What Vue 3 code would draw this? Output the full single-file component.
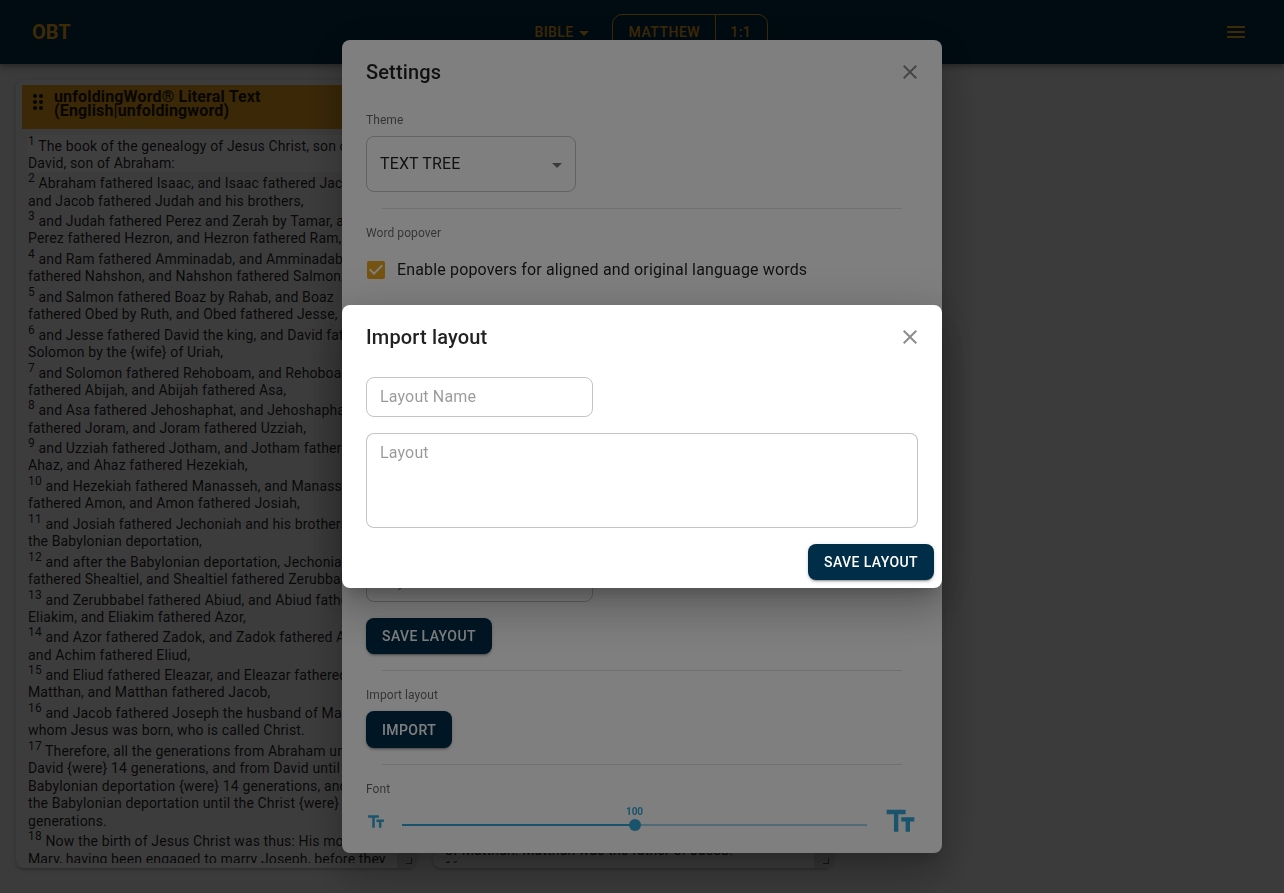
<script setup>
const closePath = 'M19 6.41 17.59 5 12 10.59 6.41 5 5 6.41 10.59 12 5 17.59 6.41 19 12 13.41 17.59 19 19 17.59 13.41 12z'
const dragPath = 'M11 18c0 1.1-.9 2-2 2s-2-.9-2-2 .9-2 2-2 2 .9 2 2zm-2-8c-1.1 0-2 .9-2 2s.9 2 2 2 2-.9 2-2-.9-2-2-2zm0-6c-1.1 0-2 .9-2 2s.9 2 2 2 2-.9 2-2-.9-2-2-2zm6 4c1.1 0 2-.9 2-2s-.9-2-2-2-2 .9-2 2 .9 2 2 2zm0 2c-1.1 0-2 .9-2 2s.9 2 2 2 2-.9 2-2-.9-2-2-2zm0 6c-1.1 0-2 .9-2 2s.9 2 2 2 2-.9 2-2-.9-2-2-2z'
const textFieldsPath = 'M2.5 4v3h5v12h3V7h5V4h-13zm19 5h-9v3h3v7h3v-7h3V9z'

const fontPercent = 50

const literalVerses = [
  'The book of the genealogy of Jesus Christ, son of David, son of Abraham:',
  'Abraham fathered Isaac, and Isaac fathered Jacob, and\u00a0Jacob fathered Judah and his brothers,',
  'and Judah fathered Perez and Zerah by Tamar, and Perez fathered Hezron, and Hezron fathered Ram,',
  'and Ram fathered Amminadab, and Amminadab fathered Nahshon, and Nahshon fathered Salmon,',
  'and Salmon fathered Boaz by Rahab, and Boaz fathered Obed by Ruth, and Obed fathered Jesse,',
  'and Jesse fathered David the king, and David fathered Solomon by the {wife} of Uriah,',
  'and Solomon fathered Rehoboam, and Rehoboam fathered Abijah, and Abijah fathered Asa,',
  'and Asa fathered Jehoshaphat, and Jehoshaphat fathered Joram, and Joram fathered Uzziah,',
  'and Uzziah fathered Jotham, and Jotham fathered Ahaz, and Ahaz fathered Hezekiah,',
  'and Hezekiah fathered Manasseh, and Manasseh fathered Amon, and Amon fathered Josiah,',
  'and Josiah fathered Jechoniah and his brothers at the\u00a0Babylonian deportation,',
  'and after the Babylonian deportation, Jechoniah fathered Shealtiel, and Shealtiel fathered Zerubbabel,',
  'and Zerubbabel fathered Abiud, and Abiud fathered Eliakim, and Eliakim fathered Azor,',
  'and Azor fathered Zadok, and Zadok fathered Achim, and Achim fathered Eliud,',
  'and Eliud fathered Eleazar, and Eleazar fathered Matthan, and Matthan fathered Jacob,',
  'and Jacob fathered Joseph the husband of Mary, from whom Jesus was born, who is called Christ.',
  'Therefore, all the generations from Abraham until David {were} 14 generations, and from David until the Babylonian deportation {were} 14 generations, and from the Babylonian deportation until the Christ {were} 14 generations.',
  'Now the birth of Jesus Christ was thus: His mother, Mary, having been engaged to marry Joseph, before they came together, was found to be pregnant by the Holy Spirit.',
]

const simplifiedVerses = [
  { n: 14, text: 'Azor was the father of Zadok. Zadok was the father of Achim. Achim was the father of Eliud.' },
  { n: 15, text: 'Eliud was the father of Eleazar. Eleazar was the father of Matthan. Matthan was the father of Jacob.' },
  { n: 16, text: 'Jacob was the father of Joseph.' },
]
</script>

<template>
  <div class="page">
    <header class="appbar">
      <div class="logo">OBT</div>
      <div class="nav">
        <div class="resource">BIBLE <span class="caret small"></span></div>
        <div class="pill">
          <span class="pill-book">MATTHEW</span>
          <span class="pill-ref">1:1</span>
        </div>
      </div>
      <svg class="menu" viewBox="0 0 24 24"><path d="M3 18h18v-2H3v2zm0-5h18v-2H3v2zm0-7v2h18V6H3z" /></svg>
    </header>

    <main class="panels">
      <section class="panel">
        <div class="panel-head">
          <svg class="drag" viewBox="0 0 24 24"><path :d="dragPath" /></svg>
          <div class="panel-title">unfoldingWord® Literal Text (English|unfoldingword)</div>
        </div>
        <div class="panel-main">
          <div class="verses">
            <div v-for="(v, i) in literalVerses" :key="i" class="verse" :class="{ active: i === 0 }">
              <sup>{{ i + 1 }}</sup> {{ v }}
            </div>
          </div>
          <div class="track"><span class="grip"></span></div>
        </div>
      </section>
      <section class="panel">
        <div class="panel-head">
          <svg class="drag" viewBox="0 0 24 24"><path :d="dragPath" /></svg>
          <div class="panel-title">unfoldingWord® Simplified Text (English|unfoldingword)</div>
        </div>
        <div class="panel-main">
          <div class="verses bottom">
            <div v-for="v in simplifiedVerses" :key="v.n" class="verse">
              <sup>{{ v.n }}</sup> {{ v.text }}
            </div>
          </div>
          <div class="track"><span class="grip"></span></div>
        </div>
      </section>
    </main>

    <div class="overlay">
      <div class="dialog settings">
        <div class="dialog-title">
          <span>Settings</span>
          <svg class="close" viewBox="0 0 24 24"><path :d="closePath" /></svg>
        </div>
        <div class="settings-body">
          <div class="label">Theme</div>
          <div class="select">TEXT TREE <span class="caret"></span></div>
          <hr class="rule" />
          <div class="label">Word popover</div>
          <div class="check-row">
            <svg class="check" viewBox="0 0 24 24"><path d="M19 3H5c-1.11 0-2 .9-2 2v14c0 1.1.89 2 2 2h14c1.11 0 2-.9 2-2V5c0-1.1-.89-2-2-2zm-9 14-5-5 1.41-1.41L10 14.17l7.59-7.59L19 8l-9 9z" /></svg>
            <span>Enable popovers for aligned and original language words</span>
          </div>
          <hr class="rule save-rule" />
          <div class="label save-label">Save layout</div>
          <input class="field" type="text" placeholder="Layout Name" />
          <button class="btn save-btn">Save layout</button>
          <hr class="rule" />
          <div class="label">Import layout</div>
          <button class="btn import-btn">Import</button>
          <hr class="rule" />
          <div class="label">Font</div>
          <div class="font-row">
            <svg class="tt tt-small" viewBox="0 0 24 24"><path :d="textFieldsPath" /></svg>
            <div class="slider">
              <div class="slider-fill" :style="{ width: fontPercent + '%' }"></div>
              <div class="slider-thumb" :style="{ left: fontPercent + '%' }">
                <span class="slider-value">100</span>
              </div>
            </div>
            <svg class="tt tt-large" viewBox="0 0 24 24"><path :d="textFieldsPath" /></svg>
          </div>
        </div>
      </div>
    </div>

    <div class="overlay">
      <div class="dialog import">
        <div class="dialog-title">
          <span>Import layout</span>
          <svg class="close" viewBox="0 0 24 24"><path :d="closePath" /></svg>
        </div>
        <div class="import-body">
          <input class="field" type="text" placeholder="Layout Name" />
          <textarea class="area" placeholder="Layout"></textarea>
        </div>
        <div class="actions">
          <button class="btn">Save layout</button>
        </div>
      </div>
    </div>
  </div>
</template>

<style>
html,
body {
  height: 100%;
  margin: 0;
  background: #ececec;
}
</style>

<style scoped>
.page {
  height: 100vh;
  display: flex;
  flex-direction: column;
  overflow: hidden;
  font-family: Roboto, "Liberation Sans", sans-serif;
  color: rgba(0, 0, 0, 0.87);
}

.appbar {
  height: 64px;
  flex: none;
  display: flex;
  align-items: center;
  justify-content: space-between;
  padding: 0 36px 0 32px;
  background: #002d48;
  color: #f5a81c;
  box-shadow: 0 2px 4px -1px rgba(0, 0, 0, 0.2), 0 4px 5px rgba(0, 0, 0, 0.14), 0 1px 10px rgba(0, 0, 0, 0.12);
  position: relative;
}

.logo {
  font-size: 20px;
  font-weight: 700;
}

.nav {
  display: flex;
  align-items: center;
  gap: 23px;
  margin-left: 8px;
}

.resource {
  display: flex;
  align-items: center;
  gap: 5px;
  font-size: 14px;
  font-weight: 500;
  letter-spacing: 0.4px;
}

.pill {
  height: 36px;
  display: flex;
  border: 1px solid #f5a81c;
  border-radius: 10px;
  font-size: 14px;
  font-weight: 500;
  letter-spacing: 0.5px;
  line-height: 34px;
  box-sizing: border-box;
}

.pill-book {
  padding: 0 15px 0 16px;
  border-right: 1px solid #f5a81c;
}

.pill-ref {
  padding: 0 16px 0 14px;
}

.menu {
  width: 24px;
  height: 24px;
  fill: #f5a81c;
}

.panels {
  flex: 1;
  display: flex;
  gap: 17px;
  padding: 16px 16px 25px;
  min-height: 0;
}

.panel {
  width: 400px;
  box-sizing: border-box;
  display: flex;
  flex-direction: column;
  padding: 5px 0 5px 6px;
  background: #f2f2f2;
  border-radius: 8px;
  box-shadow: 0 2px 2px rgba(0, 0, 0, 0.14), 0 1px 5px rgba(0, 0, 0, 0.12);
}

.panel-head {
  height: 44px;
  flex: none;
  display: flex;
  margin-right: 6px;
  padding: 5px 0 0 4px;
  box-sizing: border-box;
  background: #e9a11f;
}

.drag {
  width: 24px;
  height: 24px;
  flex: none;
  fill: #1a1a1a;
}

.panel-title {
  margin-left: 4px;
  font-size: 16px;
  font-weight: 700;
  line-height: 14px;
  letter-spacing: 0.15px;
  width: 280px;
}

.panel-main {
  flex: 1;
  min-height: 0;
  display: flex;
  margin: 5.5px 0 0 6px;
}

.verses {
  flex: 1;
  min-width: 0;
  overflow: hidden;
  padding-right: 7px;
  font-size: 14px;
  line-height: 17.5px;
  letter-spacing: 0.14px;
}

.verses.bottom {
  display: flex;
  flex-direction: column;
  justify-content: flex-end;
}

.verses.bottom .verse:last-child {
  margin-bottom: -17px;
}

.verse {
  flex: none;
  padding-bottom: 0.2px;
}

.verse.active {
  background: #ffffff;
}

.verse sup {
  font-size: 12px;
  line-height: 13px;
}

.track {
  width: 19px;
  flex: none;
  position: relative;
  background: #d6d6d6;
  margin-bottom: -5px;
}

.grip {
  position: absolute;
  right: 4px;
  bottom: 4px;
  width: 5px;
  height: 5px;
  border-right: 1px solid #555;
  border-bottom: 1px solid #555;
}

.overlay {
  position: fixed;
  inset: 0;
  display: flex;
  align-items: center;
  justify-content: center;
  background: rgba(0, 0, 0, 0.5);
}

.dialog {
  width: 600px;
  background: #fff;
  border-radius: 8px;
  box-shadow: 0 11px 15px -7px rgba(0, 0, 0, 0.2), 0 24px 38px 3px rgba(0, 0, 0, 0.14), 0 9px 46px 8px rgba(0, 0, 0, 0.12);
}

.dialog-title {
  display: flex;
  align-items: center;
  justify-content: space-between;
  padding: 16px 20px 16px 24px;
  font-size: 20px;
  font-weight: 500;
  line-height: 32px;
  letter-spacing: 0.15px;
}

.close {
  width: 24px;
  height: 24px;
  fill: rgba(0, 0, 0, 0.45);
}

.settings-body {
  padding: 6px 24px 14px;
  display: flex;
  flex-direction: column;
  align-items: flex-start;
}

.label {
  font-size: 12px;
  line-height: 20px;
  margin-bottom: 6px;
  letter-spacing: 0.07px;
  color: rgba(0, 0, 0, 0.6);
}

.rule {
  align-self: stretch;
  margin: 16px 16px 14px;
  border: 0;
  border-top: 1px solid rgba(0, 0, 0, 0.12);
}

.select {
  width: 210px;
  height: 56px;
  box-sizing: border-box;
  display: flex;
  align-items: center;
  justify-content: space-between;
  padding: 0 13px 1px;
  border: 1px solid rgba(0, 0, 0, 0.23);
  border-radius: 8px;
  font-size: 16px;
  letter-spacing: 0.15px;
}

.caret {
  width: 0;
  height: 0;
  border-left: 5px solid transparent;
  border-right: 5px solid transparent;
  border-top: 5px solid rgba(0, 0, 0, 0.54);
  margin-top: 3px;
}

.caret.small {
  border-top-color: #f5a81c;
}

.check-row {
  display: flex;
  align-items: center;
  gap: 9px;
  margin: 9px 0 0 -2px;
  font-size: 16px;
  line-height: 24px;
  letter-spacing: 0.15px;
}

.check {
  width: 24px;
  height: 24px;
  fill: #eba722;
}

.save-rule {
  margin-top: 230px;
}

.save-label {
  margin-bottom: 15px;
}

.field {
  width: 227px;
  height: 40px;
  box-sizing: border-box;
  padding: 0 13px 2px;
  border: 1px solid rgba(0, 0, 0, 0.23);
  border-radius: 8px;
  outline: none;
  background: transparent;
  font: 16px Roboto, sans-serif;
  letter-spacing: 0.15px;
  color: rgba(0, 0, 0, 0.87);
}

.field::placeholder,
.area::placeholder {
  color: rgba(0, 0, 0, 0.4);
  opacity: 1;
}

.btn {
  height: 36px;
  padding: 0 16px;
  border: 0;
  border-radius: 8px;
  background: #002d48;
  color: #fff;
  font: 500 14px Roboto, sans-serif;
  letter-spacing: 0.4px;
  text-transform: uppercase;
  box-shadow: 0 3px 1px -2px rgba(0, 0, 0, 0.2), 0 2px 2px rgba(0, 0, 0, 0.14), 0 1px 5px rgba(0, 0, 0, 0.12);
}

.save-btn {
  margin-top: 16px;
}

.import-btn {
  height: 37px;
}

.font-row {
  align-self: stretch;
  height: 35px;
  margin-top: -1px;
  display: flex;
  align-items: center;
}

.tt {
  flex: none;
  fill: #33a7d8;
}

.tt-small {
  width: 20px;
  height: 20px;
}

.tt-large {
  width: 35px;
  height: 35px;
}

.slider {
  flex: 1;
  position: relative;
  height: 2px;
  margin: 7px 16px 0;
  background: rgba(51, 167, 216, 0.45);
}

.slider-fill {
  height: 100%;
  background: #33a7d8;
}

.slider-thumb {
  position: absolute;
  top: 50%;
  width: 12px;
  height: 12px;
  margin: -6px 0 0 -6px;
  border-radius: 50%;
  background: #33a7d8;
}

.slider-value {
  position: absolute;
  bottom: 12px;
  left: 50%;
  transform: translateX(-50%);
  font-size: 10px;
  font-weight: 700;
  line-height: 14px;
  color: #33a7d8;
}

.import-body {
  padding: 8px 24px 16px;
  display: flex;
  flex-direction: column;
  align-items: flex-start;
  gap: 16px;
}

.area {
  width: 100%;
  height: 95px;
  box-sizing: border-box;
  padding: 9px 13px;
  border: 1px solid rgba(0, 0, 0, 0.23);
  border-radius: 8px;
  outline: none;
  resize: none;
  display: block;
  font: 16px/20px Roboto, sans-serif;
  letter-spacing: 0.15px;
}

.actions {
  display: flex;
  justify-content: flex-end;
  padding: 0 8px 8px;
}
</style>
